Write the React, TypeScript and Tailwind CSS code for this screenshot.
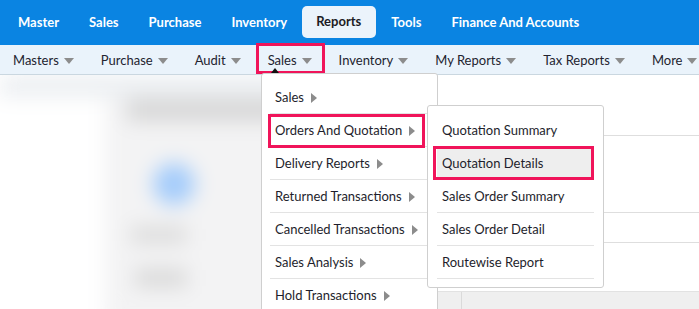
import { ReactNode } from "react";

const topItems = ["Master", "Sales", "Purchase", "Inventory", "Reports", "Tools", "Finance And Accounts"];
const subItems = ["Masters", "Purchase", "Audit", "Sales", "Inventory", "My Reports", "Tax Reports", "More"];
const salesMenu = [
  "Sales",
  "Orders And Quotation",
  "Delivery Reports",
  "Returned Transactions",
  "Cancelled Transactions",
  "Sales Analysis",
  "Hold Transactions",
];
const quoteMenu = [
  "Quotation Summary",
  "Quotation Details",
  "Sales Order Summary",
  "Sales Order Detail",
  "Routewise Report",
];

function CaretDown() {
  return (
    <svg width="10" height="6" viewBox="0 0 10 6" className="ml-[5px] mt-[1px] shrink-0">
      <path d="M0 0 L10 0 L5 6 Z" fill="#8c8c8c" />
    </svg>
  );
}

function CaretRight() {
  return (
    <svg width="6" height="10" viewBox="0 0 6 10" className="ml-[7px] shrink-0">
      <path d="M0 0 L6 5 L0 10 Z" fill="#8c8c8c" />
    </svg>
  );
}

function Row({ children, className = "" }: { children: ReactNode; className?: string }) {
  return (
    <div className={"h-[33px] pt-[2px] flex items-center border-b border-[#e3e3e3] text-[13px] text-[#1e1e2c] whitespace-nowrap " + className}>
      {children}
    </div>
  );
}

export default function App() {
  return (
    <div className="relative w-[699px] h-[309px] overflow-hidden bg-white font-['Lato','Liberation_Sans',sans-serif]">
      {/* Main nav */}
      <div className="h-[45px] bg-[#0a84e2] flex items-center pl-[3px]">
        {topItems.map((t) =>
          t === "Reports" ? (
            <div key={t} className="h-[32px] flex items-center pl-[14px] pr-[15px] rounded-[5px] bg-[#ebf3fb] text-[#1b1b24] font-bold text-[13px] mb-[2px]">
              {t}
            </div>
          ) : (
            <div key={t} className="px-[15px] text-white font-bold text-[13px] whitespace-nowrap">
              {t}
            </div>
          )
        )}
      </div>

      {/* Sub nav */}
      <div className="h-[30px] pt-[2px] bg-[#eaf3fb] border-b border-[#cad7e0] flex items-center pl-[13px] gap-[27px]">
        {subItems.map((t) => (
          <div key={t} className="flex items-center text-[13px] text-[#23232f] whitespace-nowrap">
            {t}
            <CaretDown />
          </div>
        ))}
      </div>

      {/* Page content */}
      <div className="flex h-[234px]">
        <div className="w-[437px] h-full overflow-hidden">
          <div className="h-full blur-[10px] bg-white">
            <div className="h-[22px] bg-[#eceff2]" />
            <div className="flex h-full">
              <div className="w-[108px]" />
              <div className="flex-1 bg-[#f3f3f4] pl-[22px] pt-[2px]">
                <div className="h-[22px] w-[310px] bg-[#d6d6d6]" />
                <div className="ml-[26px] mt-[42px] w-[42px] h-[42px] rounded-full bg-[#a4ccfb]" />
                <div className="mt-[22px] ml-[4px] w-[56px] h-[16px] bg-[#dadada]" />
                <div className="mt-[26px] ml-[8px] w-[52px] h-[18px] bg-[#d8d8d8]" />
              </div>
            </div>
          </div>
        </div>
        <div className="flex-1 flex flex-col">
          <div className="h-[61px] border-b border-[#dedede]" />
          <div className="h-[77px] border-b border-[#dedede]" />
          <div className="h-[30px] border-b border-[#dedede]" />
          <div className="h-[48px]" />
          <div className="flex-1 bg-[#efefef] border-t border-[#e2e2e2] flex">
            <div className="w-[25px] border-r border-[#dadada]" />
          </div>
        </div>
      </div>

      {/* Sales highlight in sub nav */}
      <div className="absolute left-[256px] top-[43px] w-[69px] h-[31px] border-[3px] border-[#f0145a]" />
      <svg className="absolute left-[271px] top-[68px]" width="8" height="5" viewBox="0 0 8 5">
        <path d="M0 5 L4 0 L8 5 Z" fill="#111" />
      </svg>

      {/* Sales dropdown */}
      <div className="absolute left-[261px] top-[73px] w-[177px] h-[250px] bg-white border border-[#cfcfcf] rounded-[3px] pt-[7px] pl-[8px]">
        {salesMenu.map((t) => (
          <Row key={t} className="pl-[5px]">
            {t}
            <CaretRight />
          </Row>
        ))}
      </div>
      <div className="absolute left-[268px] top-[114px] w-[157px] h-[34px] border-[3px] border-[#f0145a]" />

      {/* Orders and quotation submenu */}
      <div className="absolute left-[427px] top-[105px] w-[177px] h-[183px] bg-white border border-[#cfcfcf] rounded-[3px] pt-[8px] pl-[9px] pr-[9px]">
        {quoteMenu.map((t) => (
          <Row key={t} className={"pl-[5px] " + (t === "Quotation Details" ? "bg-[#eeeeee]" : "")}>
            {t}
          </Row>
        ))}
      </div>
      <div className="absolute left-[433px] top-[146px] w-[161px] h-[34px] border-[3px] border-[#f0145a]" />
    </div>
  );
}
